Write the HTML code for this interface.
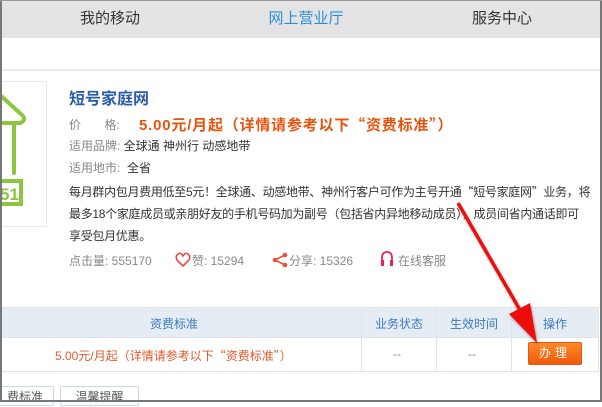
<!DOCTYPE html>
<html><head><meta charset="utf-8"><style>
*{margin:0;padding:0;box-sizing:border-box}
body{width:602px;height:402px;overflow:hidden;background:#fff;font-family:"Liberation Sans","Noto Sans CJK SC",sans-serif;position:relative;color:#333}
.a{position:absolute;white-space:nowrap}
.nav{left:0;top:0;width:602px;height:38px;background:#e4e4e4}
.nv{top:0;height:38px;line-height:38px;font-size:15px;color:#333;transform:translateX(-50%)}
.s{font-size:12px;color:#333}
.g{color:#888}
.q{font-family:"Noto Sans CJK SC",sans-serif}
</style></head><body>
<div class="a nav"></div>
<div class="a nv" style="left:110px">我的移动</div>
<div class="a nv" style="left:306px;color:#2b8fd8">网上营业厅</div>
<div class="a nv" style="left:502px">服务中心</div>
<div class="a" style="left:0;top:69px;width:602px;height:2px;background:#ececec"></div>
<div class="a" style="left:0;top:81px;width:47px;height:146px;border:1px solid #e6eaf0;border-left:none"></div>
<svg class="a" style="left:0;top:81px" width="46" height="146"><path d="M0 14 L22 34 Q27 39 20 42 L0 42 M14 42 L14 92" stroke="#8cc63f" stroke-width="4" fill="none" stroke-linecap="round"/><path d="M0 100 H21 V123 H0" stroke="#8cc63f" stroke-width="4" fill="none"/><text x="0" y="119" font-size="17" font-weight="bold" fill="#8cc63f" font-family="Liberation Sans">51</text></svg>
<div class="a" style="left:69px;top:85px;font-size:16px;font-weight:bold;color:#2a5ba8">短号家庭网</div>
<div class="a s g" style="left:69px;top:116px;">价&nbsp;&nbsp;&nbsp;&nbsp;&nbsp;&nbsp;&nbsp;格:</div>
<div class="a" style="left:139px;top:114px;font-size:15px;font-weight:bold;color:#e8540e;letter-spacing:0.8px">5.00元/月起（详情请参考以下<span class="q">“</span>资费标准<span class="q">”</span>）</div>
<div class="a s" style="left:69px;top:137px"><span class="g">适用品牌:</span> 全球通 神州行 动感地带</div>
<div class="a s" style="left:69px;top:159px"><span class="g">适用地市:</span>&nbsp;&nbsp;全省</div>
<div class="a s" style="left:69px;top:181px;line-height:22px;letter-spacing:-0.3px">每月群内包月费用低至5元！全球通、动感地带、神州行客户可作为主号开通<span class="q">“</span>短号家庭网<span class="q">”</span>业务，将<br>最多18个家庭成员或亲朋好友的手机号码加为副号（包括省内异地移动成员），成员间省内通话即可<br>享受包月优惠。</div>
<div class="a s g" style="left:69px;top:252px">点击量:&nbsp;555170</div>
<svg class="a" style="left:175px;top:252px" width="16" height="16"><path d="M8 14 L2 8 Q0 4 3 2 Q6 0 8 4 Q10 0 13 2 Q16 4 14 8 Z" fill="none" stroke="#e84b4b" stroke-width="1.6"/></svg>
<div class="a s g" style="left:192px;top:252px">赞:&nbsp;15294</div>
<svg class="a" style="left:272px;top:252px" width="16" height="16"><circle cx="13" cy="3" r="2.3" fill="#e8543a"/><circle cx="3" cy="8" r="2.3" fill="#e8543a"/><circle cx="13" cy="13" r="2.3" fill="#e8543a"/><path d="M13 3 L3 8 L13 13" stroke="#e8543a" stroke-width="1.6" fill="none"/></svg>
<div class="a s g" style="left:289px;top:252px">分享:&nbsp;15326</div>
<svg class="a" style="left:380px;top:251px" width="14" height="16"><path d="M2 11 V7 Q2 1 7 1 Q12 1 12 7 V11" stroke="#e8244a" stroke-width="1.8" fill="none"/><rect x="1" y="9" width="3" height="6" fill="#e8244a"/><rect x="10" y="9" width="3" height="6" fill="#e8244a"/></svg>
<div class="a s g" style="left:398px;top:252px">在线客服</div>
<div class="a" style="left:0;top:307px;width:599px;height:65px;border:1px solid #dde4ec;border-left:none"></div>
<div class="a" style="left:0;top:308px;width:598px;height:30px;background:#e6ecf3;border-bottom:1px solid #dde4ec"></div>
<div class="a" style="left:361px;top:308px;width:1px;height:63px;background:#dde4ec"></div>
<div class="a" style="left:436px;top:308px;width:1px;height:63px;background:#dde4ec"></div>
<div class="a" style="left:511px;top:308px;width:1px;height:63px;background:#dde4ec"></div>
<div class="a s" style="left:150px;top:315px;color:#3a7bbf">资费标准</div>
<div class="a s" style="left:375px;top:315px;color:#3a7bbf">业务状态</div>
<div class="a s" style="left:450px;top:315px;color:#3a7bbf">生效时间</div>
<div class="a s" style="left:543px;top:315px;color:#3a7bbf">操作</div>
<div class="a s" style="left:55px;top:347px;color:#e05a2a">5.00元/月起（详情请参考以下<span class="q">“</span>资费标准<span class="q">”</span>）</div>
<div class="a s g" style="left:393px;top:347px">--</div>
<div class="a s g" style="left:468px;top:347px">--</div>
<div class="a" style="left:528px;top:342px;width:54px;height:23px;border-radius:2px;background:linear-gradient(#ff8a2a,#f05a0a);border:1px solid #e05a10;color:#fff;font-size:12px;line-height:21px;text-align:center;letter-spacing:4px">办理</div>
<div class="a" style="left:-2px;top:386px;width:56px;height:20px;border:1px solid #c8d8ee;border-radius:2px;font-size:12px;line-height:20px;color:#555;text-align:right;padding-right:10px">费标准</div>
<div class="a" style="left:60px;top:386px;width:79px;height:20px;border:1px solid #c8d8ee;border-radius:2px;font-size:12px;line-height:20px;color:#555;text-align:center">温馨提醒</div>
<svg class="a" style="left:0;top:0" width="602" height="402"><defs><filter id="sh"><feDropShadow dx="1" dy="2" stdDeviation="1.2" flood-opacity="0.35"/></filter></defs><g filter="url(#sh)"><path d="M458 203 L520 310" stroke="#ee1111" stroke-width="3.5"/><path d="M537 343 L509 314 L530 303 Z" fill="#ee1111"/></g></svg>
<div class="a" style="left:0;top:0;width:2px;height:402px;background:#777"></div>
<div class="a" style="left:600px;top:0;width:2px;height:402px;background:#777"></div>
<div class="a" style="left:0;top:400px;width:602px;height:2px;background:#777"></div>
<div class="a" style="left:0;top:0;width:602px;height:1px;background:#999"></div>
</body></html>
